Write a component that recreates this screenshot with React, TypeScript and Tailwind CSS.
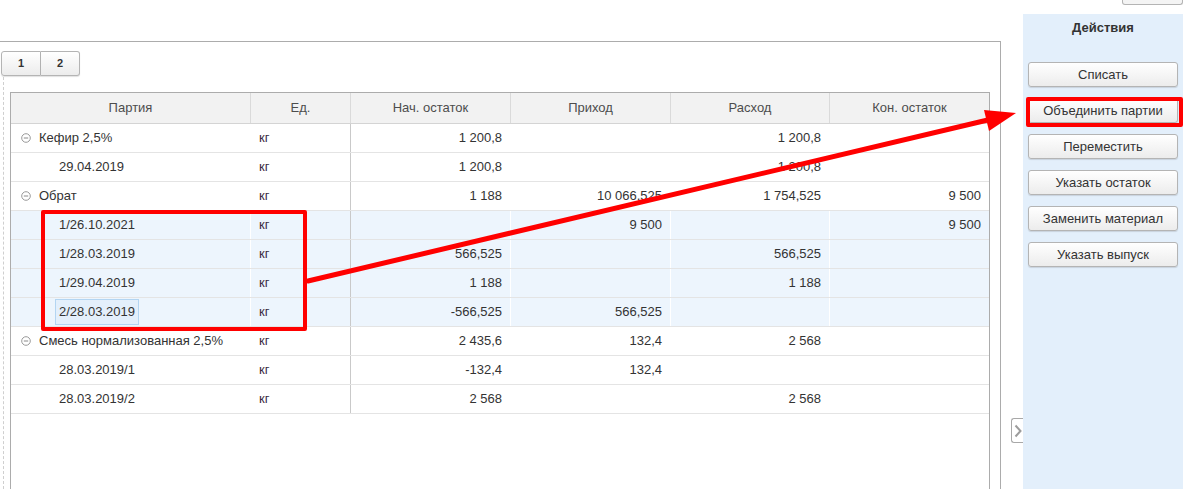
import React from "react";

type Row = {
  kind: "group" | "item";
  name: string;
  start?: string;
  inc?: string;
  out?: string;
  end?: string;
  hl?: boolean;
  selected?: boolean;
};

const ROWS: Row[] = [
  { kind: "group", name: "Кефир 2,5%", start: "1 200,8", out: "1 200,8" },
  { kind: "item", name: "29.04.2019", start: "1 200,8", out: "1 200,8" },
  { kind: "group", name: "Обрат", start: "1 188", inc: "10 066,525", out: "1 754,525", end: "9 500" },
  { kind: "item", name: "1/26.10.2021", inc: "9 500", end: "9 500", hl: true },
  { kind: "item", name: "1/28.03.2019", start: "566,525", out: "566,525", hl: true },
  { kind: "item", name: "1/29.04.2019", start: "1 188", out: "1 188", hl: true },
  { kind: "item", name: "2/28.03.2019", start: "-566,525", inc: "566,525", hl: true, selected: true },
  { kind: "group", name: "Смесь нормализованная 2,5%", start: "2 435,6", inc: "132,4", out: "2 568" },
  { kind: "item", name: "28.03.2019/1", start: "-132,4", inc: "132,4" },
  { kind: "item", name: "28.03.2019/2", start: "2 568", out: "2 568" },
];

const HEADERS = ["Партия", "Ед.", "Нач. остаток", "Приход", "Расход", "Кон. остаток"];
const ACTIONS = ["Списать", "Объединить партии", "Переместить", "Указать остаток", "Заменить материал", "Указать выпуск"];

const cols = "grid grid-cols-[240px_100px_160px_160px_159px_1fr]";
const btnCls =
  "flex items-center justify-center border border-[#b4b4b4] rounded-[3px] bg-gradient-to-b from-white to-[#ececec] shadow-[0_1px_1px_rgba(0,0,0,0.12)] text-[#333]";

function Collapse() {
  return (
    <svg width="10" height="10" viewBox="0 0 10 10" className="shrink-0">
      <circle cx="5" cy="5" r="4.3" fill="none" stroke="#9a9a9a" strokeWidth="1" />
      <path d="M2.8 5h4.4" stroke="#8a8a8a" strokeWidth="1" />
    </svg>
  );
}

function Num({ v, hl, last }: { v?: string; hl?: boolean; last?: boolean }) {
  return (
    <div
      className={`flex items-center justify-end pr-[8px] ${last ? "" : "border-r"} ${hl ? "border-white" : "border-transparent"}`}
    >
      {v}
    </div>
  );
}

export default function App() {
  return (
    <div
      className="relative w-[1191px] h-[489px] overflow-hidden bg-white flex items-start text-[13px] text-[#333]"
      style={{ fontFamily: '"Liberation Sans", Arial, sans-serif' }}
    >
      {/* left form panel */}
      <div className="w-[1001px] h-[448px] mt-[41px] border-t border-r border-[#acacac] flex flex-col">
        <div className="flex pt-[9px] pl-[1px]">
          <div className={`${btnCls} w-[40px] h-[25px] text-[11px] font-bold rounded-r-none`}>1</div>
          <div className={`${btnCls} w-[39px] h-[25px] text-[11px] font-bold rounded-l-none border-l-0`}>2</div>
        </div>
        <div className="flex-1 ml-[3px] mt-[1px] border-l border-dashed border-[#cfcfcf] pt-[15px] pl-[6px] flex">
          <div className="w-[980px] border border-b-0 border-[#acacac] flex flex-col">
            <div className={`${cols} h-[31px] bg-[#f2f2f2] border-b border-[#d4d4d4] text-[#4d4d4d]`}>
              {HEADERS.map((h, i) => (
                <div
                  key={h}
                  className={`flex items-center justify-center ${i < 5 ? "border-r border-[#dadada]" : ""}`}
                >
                  {h}
                </div>
              ))}
            </div>
            {ROWS.map((r) => (
              <div
                key={r.name}
                className={`${cols} h-[29px] border-b border-[#e4e4e4] ${r.hl ? "bg-[#edf5fd]" : "bg-white"}`}
              >
                <div
                  className={`flex items-center border-r ${r.hl ? "border-white" : "border-transparent"} ${r.kind === "group" ? "pl-[10px] gap-[8px]" : "pl-[48px]"}`}
                >
                  {r.kind === "group" && <Collapse />}
                  {r.selected ? (
                    <span className="h-[26px] flex items-center px-[3px] -ml-[4px] border border-[#b3d5f2] bg-[#e3effb]">
                      {r.name}
                    </span>
                  ) : (
                    <span>{r.name}</span>
                  )}
                </div>
                <div className="flex items-center pl-[8px] border-r border-[#c9c9c9] text-[#3a2a3e]">кг</div>
                <Num v={r.start} hl={r.hl} />
                <Num v={r.inc} hl={r.hl} />
                <Num v={r.out} hl={r.hl} />
                <Num v={r.end} hl={r.hl} last />
              </div>
            ))}
            <div className="flex-1" />
          </div>
        </div>
      </div>

      {/* collapse handle */}
      <div className="w-[22px] pt-[418px] pl-[10px]">
        <div className="w-[12px] h-[25px] border border-r-0 border-[#a8a8a8] rounded-l-[3px] bg-white flex items-center justify-center">
          <svg width="8" height="14" viewBox="0 0 8 14">
            <path d="M1.5 1.5 6.5 7l-5 5.5" fill="none" stroke="#9c9c9c" strokeWidth="2" />
          </svg>
        </div>
      </div>

      {/* actions sidebar */}
      <div className="w-[168px] flex flex-col">
        <div className="ml-[99px] w-[61px] h-[5px] border border-t-0 border-[#b4b4b4] rounded-b-[3px] bg-[#f4f4f4]" />
        <div className="mt-[9px] w-[160px] h-[475px] bg-[#e3effb] flex flex-col items-center pt-[6px]">
          <div className="font-bold leading-[16px] text-[#333]">Действия</div>
          <div className="mt-[26px] flex flex-col gap-[11px]">
            {ACTIONS.map((a) => (
              <div key={a} className={`${btnCls} w-[150px] h-[25px]`}>
                {a}
              </div>
            ))}
          </div>
        </div>
      </div>

      {/* annotations */}
      <div className="absolute left-[41px] top-[210px] w-[266px] h-[121px] border-4 border-[#ff0000] rounded-[2px] pointer-events-none" />
      <div className="absolute left-[1026px] top-[97px] w-[157px] h-[30px] border-4 border-[#ff0000] rounded-[2px] pointer-events-none" />
      <svg className="absolute inset-0 pointer-events-none" width="1191" height="489" viewBox="0 0 1191 489">
        <line x1="308" y1="281" x2="992" y2="119" stroke="#ff0000" strokeWidth="5" strokeLinecap="round" />
        <polygon points="1016,113 984,110 989,131" fill="#ff0000" />
      </svg>
    </div>
  );
}
